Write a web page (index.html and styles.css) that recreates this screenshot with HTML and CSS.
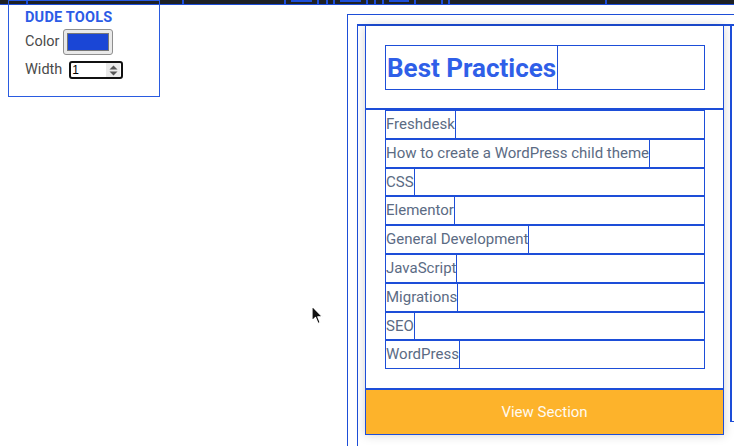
FILE: index.html
```html
<!DOCTYPE html>
<html lang="en">
<head>
<meta charset="utf-8">
<title>Best Practices</title>
<link rel="stylesheet" href="styles.css">
</head>
<body>
<div class="topbar">
  <div class="seg s1"></div>
  <div class="seg s2"></div>
  <div class="seg s3"></div>
  <div class="seg s4"><span class="tab"></span></div>
  <div class="seg s5"></div>
  <div class="seg s6"></div>
  <div class="seg s7"><span class="tab"></span></div>
  <div class="seg s8"></div>
  <div class="seg s9"></div>
  <div class="seg s10"><span class="tab"></span></div>
  <div class="seg s11"></div>
  <div class="seg s12"></div>
  <div class="seg s13"></div>
  <div class="seg s14"></div>
</div>

<div class="tools">
  <div class="tools-title">DUDE TOOLS</div>
  <div class="tools-row row-color"><label class="tools-label">Color</label><input class="color-input" type="color" value="#1a46d6"></div>
  <div class="tools-row row-width"><label class="tools-label">Width</label>
    <div class="num-box">
      <input class="num-input" type="text" value="1">
      <span class="spin">
        <svg width="9" height="11" viewBox="0 0 9 11"><path d="M4.5 0.5 L8.5 4.5 L0.5 4.5 Z M0.5 6.5 L8.5 6.5 L4.5 10.5 Z" fill="#555"/></svg>
      </span>
    </div>
  </div>
</div>

<main class="page">
  <section class="section">
    <div class="row">
      <article class="card">
        <header class="card-head">
          <div class="head-box"><h2 class="card-title">Best Practices</h2></div>
        </header>
        <ul class="topics">
          <li class="topic"><a class="topic-link">Freshdesk</a></li>
          <li class="topic"><a class="topic-link">How to create a WordPress child theme</a></li>
          <li class="topic"><a class="topic-link">CSS</a></li>
          <li class="topic"><a class="topic-link">Elementor</a></li>
          <li class="topic"><a class="topic-link">General Development</a></li>
          <li class="topic"><a class="topic-link">JavaScript</a></li>
          <li class="topic"><a class="topic-link">Migrations</a></li>
          <li class="topic"><a class="topic-link">SEO</a></li>
          <li class="topic"><a class="topic-link">WordPress</a></li>
        </ul>
        <a class="view-btn">View Section</a>
      </article>
      <article class="card card-next"></article>
    </div>
  </section>
</main>

<svg class="cursor" width="14" height="22" viewBox="0 0 14 22">
  <path d="M1 1 L1 16 L4.5 12.5 L7 18.5 L9.2 17.6 L6.8 11.8 L11.5 11.8 Z" fill="#111" stroke="#fff" stroke-width="1.2" stroke-linejoin="round"/>
</svg>
</body>
</html>
```

FILE: styles.css
```css
* { box-sizing: border-box; }
html, body { margin: 0; padding: 0; overflow: hidden; }
body {
  width: 734px;
  height: 446px;
  background: #fff;
  font-family: Roboto, "Liberation Sans", sans-serif;
  color: #444;
}

/* top strip */
.topbar {
  display: flex;
  height: 5px;
  background: #1e2125;
  border-bottom: 1px solid #1d4ed8;
}
.seg { height: 4px; border-right: 2px solid #1d4ed8; position: relative; }
.s1 { width: 28px; }
.s2 { width: 156px; }
.s3 { width: 102px; }
.s4 { width: 33px; }
.s5 { width: 9px; }
.s6 { width: 7px; }
.s7 { width: 33px; }
.s8 { width: 8px; }
.s9 { width: 8px; }
.s10 { width: 32px; }
.s11 { width: 27px; }
.s12 { width: 7px; }
.s13 { width: 157px; }
.s14 { flex: 1; border-right: 0; }
.tab {
  position: absolute;
  left: 5px;
  right: 5px;
  top: 0;
  height: 2px;
  background: #1d4ed8;
}

/* floating tool panel */
.tools {
  position: absolute;
  left: 8px;
  top: 0;
  width: 152px;
  height: 97px;
  border: 1px solid #2a5be0;
  padding: 7px 0 0 16px;
}
.tools-title {
  font-weight: 700;
  font-size: 14.5px;
  color: #2c5be6;
  line-height: 20px;
  letter-spacing: 0.2px;
}
.tools-row {
  display: flex;
  align-items: center;
  font-size: 14.5px;
  color: #4a4a4a;
}
.row-color { margin-top: 1px; gap: 4px; }
.row-width { margin-top: 6px; gap: 7px; }
.tools-label { line-height: 18px; }
.color-input {
  -webkit-appearance: none;
  appearance: none;
  width: 50px;
  height: 26px;
  margin: 0;
  padding: 3px;
  border: 1px solid #8f8f8f;
  border-radius: 3px;
  background: #e9e9e9;
}
.color-input::-webkit-color-swatch-wrapper { padding: 0; }
.color-input::-webkit-color-swatch { border: 1px solid #777; border-radius: 0; }
.num-box {
  display: flex;
  align-items: center;
  width: 54px;
  height: 18px;
  border: 2px solid #111;
  border-radius: 3px;
  background: #fff;
  overflow: hidden;
}
.num-input {
  flex: 1;
  min-width: 0;
  height: 100%;
  margin: 0;
  padding: 0 1px;
  border: 0;
  font: 12px "Liberation Sans", sans-serif;
  color: #000;
  outline: none;
  background: transparent;
}
.spin {
  display: flex;
  align-items: center;
  justify-content: center;
  width: 14px;
  height: 14px;
  margin-right: 1px;
  background: #e9e9e9;
}

/* main section */
.page { padding: 9px 0 0 347px; }
.section {
  border: 1px solid #1d4ed8;
  border-right: 0;
  border-bottom: 0;
  padding: 9px 0 0 9px;
  height: 440px;
}
.row {
  display: flex;
  gap: 6px;
  border-top: 2px solid #1d4ed8;
  border-left: 1px solid #1d4ed8;
  padding-left: 7px;
  height: 430px;
  align-items: flex-start;
}
.card {
  flex: 0 0 359px;
  width: 359px;
  border: 1px solid #1d4ed8;
  border-top: 0;
  background: #fff;
  box-shadow: 0 0 10px rgba(0, 0, 0, 0.18);
  display: flex;
  flex-direction: column;
}
.card-head {
  padding: 19px 18px 18px 19px;
  border-bottom: 2px solid #1d4ed8;
}
.head-box {
  border: 1px solid #1d4ed8;
  height: 45px;
}
.card-title {
  display: inline-block;
  margin: 0;
  height: 43px;
  line-height: 45px;
  font-size: 26px;
  font-weight: 700;
  color: #2f5fe8;
  border-right: 1px solid #1d4ed8;
  padding: 0 1px 0 1px;
  letter-spacing: 0;
}
.topics {
  list-style: none;
  margin: 0;
  padding: 0 18px 19px 19px;
}
.topic {
  border: 1px solid #1d4ed8;
  height: 28.8px;
  display: flex;
}
.topic-link {
  display: inline-block;
  height: 100%;
  line-height: 26.8px;
  font-size: 15px;
  color: #5b6b84;
  border-right: 1px solid #1d4ed8;
  border-left: 1px solid #1d4ed8;
  padding-right: 0;
  margin-left: -1px;
}
.view-btn {
  display: block;
  height: 46px;
  border-top: 2px solid #1d4ed8;
  background: #fdb32b;
  color: #fffaf0;
  text-align: center;
  line-height: 44px;
  font-size: 15px;
  font-weight: 400;
}
.card-next {
  flex: 1 0 40px;
  height: 396px;
  border-left: 2px solid #1d4ed8;
  border-top: 0;
  box-shadow: none;
}

.cursor {
  position: absolute;
  left: 311px;
  top: 305px;
}
```
